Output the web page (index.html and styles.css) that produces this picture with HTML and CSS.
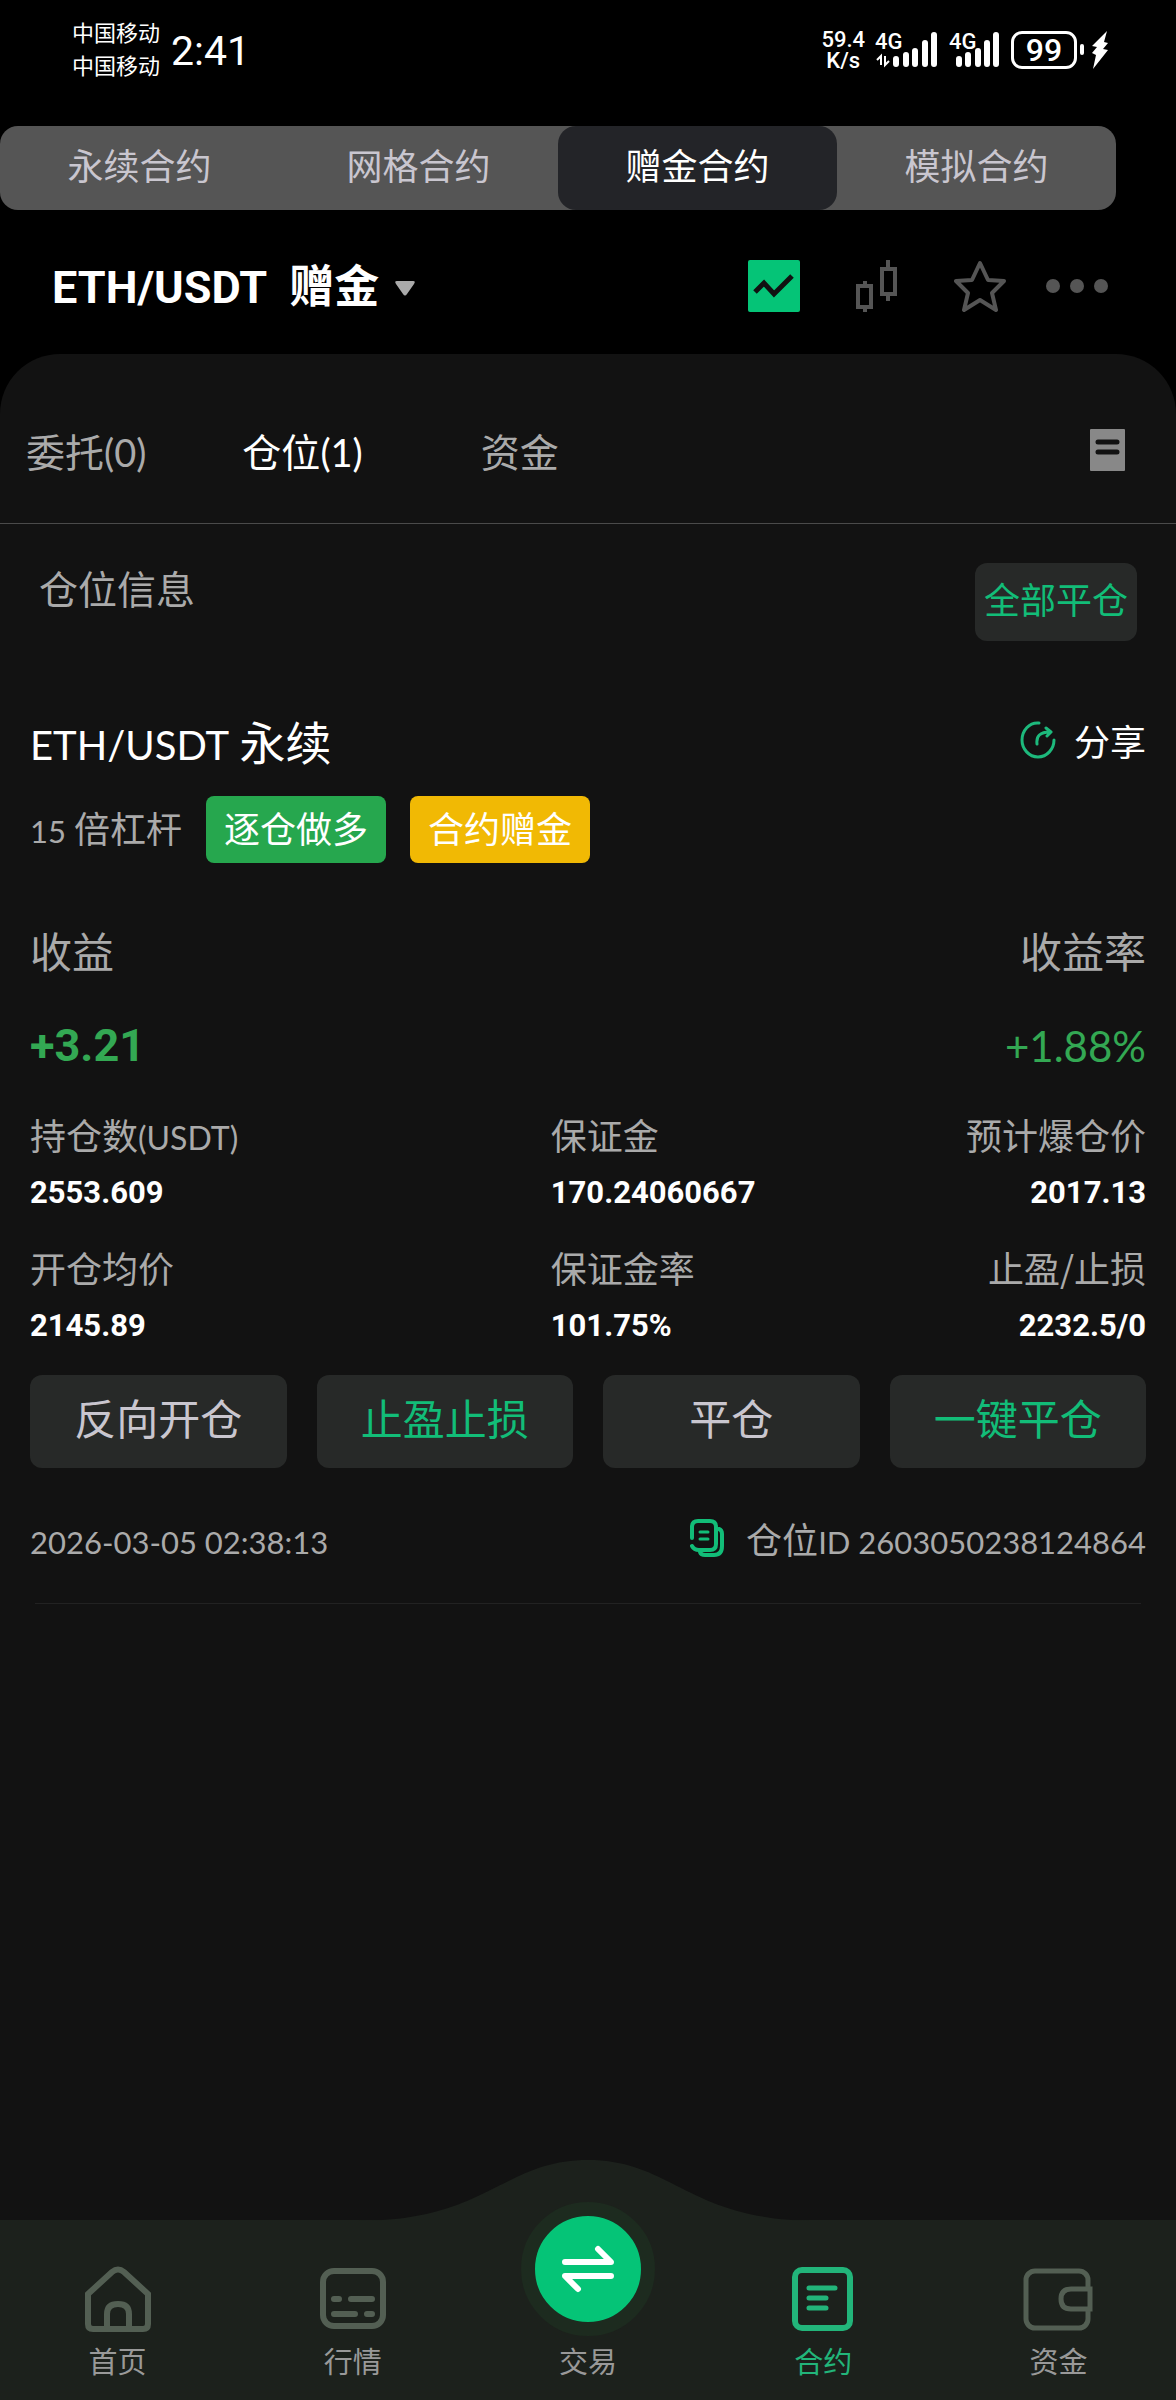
FILE: index.html
```html
<!DOCTYPE html>
<html lang="zh-CN">
<head>
    <meta charset="UTF-8">
    <meta name="viewport" content="width=device-width, initial-scale=1.0">
    <title>赠金合约</title>
    <link rel="stylesheet" href="styles.css">
</head>
<body>
    <div class="status-bar">
        <div class="carriers">
            <span>中国移动</span>
            <span>中国移动</span>
        </div>
        <span class="clock">2:41</span>
        <div class="status-right">
            <div class="net-speed"><span>59.4</span><span>K/s</span></div>
            <svg class="signal" width="64" height="50" viewBox="0 -6 64 50">
                <text x="0" y="18" class="signal-text">4G</text>
                <path d="M6 34v-9l-4 4M10 25v9l4-4" fill="none" stroke="#fff" stroke-width="2"/>
                <path d="M21 33v-5M31 33v-9M40 33V20M50 33V12M59 33V4" stroke="#fff" stroke-width="6" stroke-linecap="round"/>
            </svg>
            <svg class="signal" width="52" height="50" viewBox="0 -6 52 50">
                <text x="0" y="18" class="signal-text">4G</text>
                <path d="M10 33v-5M19 33v-9M29 33V20M38 33V12M47 33V4" stroke="#fff" stroke-width="6" stroke-linecap="round"/>
            </svg>
            <span class="battery">99</span>
            <svg width="18" height="38" viewBox="0 0 18 38">
                <path d="M16 0L1 15l5 1-5 6 4 2-3 14 15-19-5-1 5-6-4-1z" fill="#fff"/>
            </svg>
        </div>
    </div>

    <nav class="contract-tabs">
        <button>永续合约</button>
        <button>网格合约</button>
        <button class="active">赠金合约</button>
        <button>模拟合约</button>
    </nav>

    <header class="pair-bar">
        <button class="pair-select">
            <span>ETH/USDT</span>
            <span>赠金</span>
            <svg width="20" height="15" viewBox="0 0 20 15"><path d="M2 0h16q3 0 1 3l-7 10q-2 3-4 0L1 3q-2-3 1-3z" fill="#aaa"/></svg>
        </button>
        <div class="pair-tools">
            <button aria-label="图表">
                <svg width="52" height="52" viewBox="0 0 52 52">
                    <rect width="52" height="52" rx="2" fill="#05c477"/>
                    <path d="M7 32l9-9 10 11 18-18" fill="none" stroke="#111" stroke-width="5"/>
                </svg>
            </button>
            <button aria-label="K线">
                <svg width="42" height="52" viewBox="0 0 42 52" fill="none" stroke="#555" stroke-width="4">
                    <path d="M2 26h13v21H2zM26 9h13v25H26zM9 21v5M9 47v5M32 0v9M32 34v7"/>
                </svg>
            </button>
            <button aria-label="收藏">
                <svg width="52" height="52" viewBox="0 0 52 52" fill="none" stroke="#555" stroke-width="4" stroke-linejoin="round">
                    <path d="M26 3l8 17 16 1-12 12 4 17-16-10-16 10 4-17L2 21l16-1z"/>
                </svg>
            </button>
            <button aria-label="更多">
                <svg width="62" height="16" viewBox="0 0 62 16" fill="#555">
                    <circle cx="7" cy="8" r="7"/><circle cx="31" cy="8" r="7"/><circle cx="55" cy="8" r="7"/>
                </svg>
            </button>
        </div>
    </header>

    <main class="panel">
        <div class="panel-tabs">
            <button>委托<span class="latin">(0)</span></button>
            <button class="active">仓位<span class="latin">(1)</span></button>
            <button>资金</button>
            <button class="history" aria-label="历史记录">
                <svg width="35" height="42" viewBox="0 0 35 42">
                    <rect width="35" height="42" rx="1" fill="#888"/>
                    <path d="M8 13h19M8 23h19" stroke="#121212" stroke-width="5" stroke-linecap="round"/>
                </svg>
            </button>
        </div>

        <div class="section-head">
            <h2>仓位信息</h2>
            <button class="close-all">全部平仓</button>
        </div>

        <section class="position">
            <div class="row">
                <h3><span class="latin">ETH/USDT</span> 永续</h3>
                <button class="share">
                    <svg width="36" height="38" viewBox="0 0 36 38" fill="none" stroke="#1db97c" stroke-width="3" stroke-linecap="round" stroke-linejoin="round">
                        <path d="M19 2C9 1 2 10 2 19s7 17 16 17 16-8 16-17M17 23c-1-8 3-12 13-12M26 7l5 4-4 4"/>
                    </svg>
                    分享
                </button>
            </div>
            <div class="tags">
                <span class="lever"><span class="latin">15</span> 倍杠杆</span>
                <span class="tag tag-green">逐仓做多</span>
                <span class="tag tag-yellow">合约赠金</span>
            </div>

            <div class="row profit-label">
                <span>收益</span>
                <span>收益率</span>
            </div>
            <div class="row profit">
                <strong>+3.21</strong>
                <span>+1.88%</span>
            </div>

            <dl class="stats">
                <div><dt>持仓数<span class="latin">(USDT)</span></dt><dd>2553.609</dd></div>
                <div><dt>保证金</dt><dd>170.24060667</dd></div>
                <div><dt>预计爆仓价</dt><dd>2017.13</dd></div>
                <div><dt>开仓均价</dt><dd>2145.89</dd></div>
                <div><dt>保证金率</dt><dd>101.75%</dd></div>
                <div><dt>止盈/止损</dt><dd>2232.5/0</dd></div>
            </dl>

            <div class="actions">
                <button>反向开仓</button>
                <button class="green">止盈止损</button>
                <button>平仓</button>
                <button class="green">一键平仓</button>
            </div>

            <div class="row meta">
                <span><span class="latin">2026-03-05 02:38:13</span></span>
                <span class="position-id">
                    <button aria-label="复制">
                        <svg width="34" height="38" viewBox="0 0 34 38" fill="none" stroke="#12bd78" stroke-width="4" stroke-linecap="round">
                            <path d="M2 19V8q0-6 6-6h12q6 0 6 6v17q0 6-6 6H9q-5 0-7-4"/>
                            <path d="M29 10q3 1 3 5v12q0 9-8 9H15q-4 0-5-3"/>
                            <path d="M10 13h8M10 20h8" stroke-width="3"/>
                        </svg>
                    </button>
                    <span>仓位<span class="latin">ID 2603050238124864</span></span>
                </span>
            </div>
            <hr>
        </section>
    </main>

    <nav class="bottom-nav">
        <svg class="hump" width="460" height="61" viewBox="0 0 460 61">
            <path d="M0 61C130 61 145 0 230 0S330 61 460 61z" fill="#1c211c"/>
        </svg>
        <a href="#">
            <svg width="66" height="66" viewBox="0 0 66 66" fill="none" stroke="#535f53" stroke-width="6">
                <path d="M3 28L27 6q6-5 12 0l24 22v30q0 5-5 5H8q-5 0-5-5z"/>
                <path d="M22 62V48q0-10 11-10t11 10v14"/>
            </svg>
            首页
        </a>
        <a href="#">
            <svg width="66" height="66" viewBox="0 0 66 66" fill="none" stroke="#535f53" stroke-width="6" stroke-linecap="round">
                <rect x="3" y="5" width="60" height="55" rx="11"/>
                <path d="M14 33h5M31 33h21M14 48h21M47 48h5"/>
            </svg>
            行情
        </a>
        <a href="#">
            <span class="trade">
                <svg width="56" height="50" viewBox="0 0 56 50" fill="none" stroke="#fff" stroke-width="6" stroke-linecap="round" stroke-linejoin="round">
                    <path d="M5 18h46L38 5M51 32H5l13 13"/>
                </svg>
            </span>
            交易
        </a>
        <a href="#" class="active">
            <svg width="62" height="66" viewBox="0 0 62 66" fill="none" stroke="#22b57a" stroke-width="6" stroke-linecap="round">
                <rect x="3" y="4" width="55" height="58" rx="7"/>
                <path d="M17 22h26M17 32h17M17 42h17" stroke-width="5"/>
            </svg>
            合约
        </a>
        <a href="#">
            <svg width="70" height="66" viewBox="0 0 70 66" fill="none" stroke="#535f53" stroke-width="5">
                <rect x="3" y="5" width="62" height="57" rx="9"/>
                <path d="M67 23H48q-10 0-10 10t10 10h19z" fill="#1c211c"/>
            </svg>
            资金
        </a>
    </nav>
</body>
</html>
```
FILE: styles.css
```css
* {
    box-sizing: border-box;
}
body {
    margin: 0;
    min-height: 100vh;
    display: flex;
    flex-direction: column;
    background: #000;
    color: #fff;
    font-family: "Noto Sans CJK SC", sans-serif;
    font-size: 36px;
    line-height: 48px;
}
button {
    padding: 0;
    border: none;
    background: none;
    color: inherit;
    font: inherit;
    cursor: pointer;
}
h2, h3, dl, dd {
    margin: 0;
    font-weight: normal;
}
svg {
    display: block;
}
.latin {
    font-family: Lato, sans-serif;
    font-size: 32px;
    line-height: 1;
}

/* status bar */
.status-bar {
    display: flex;
    align-items: center;
    height: 100px;
    padding: 0 67px 0 72px;
    font-family: Roboto, "Noto Sans CJK SC", sans-serif;
}
.carriers {
    display: flex;
    flex-direction: column;
    font-size: 22px;
    line-height: 33px;
}
.clock {
    margin-left: 11px;
    padding-top: 2px;
    font-size: 41px;
}
.status-right {
    display: flex;
    align-items: center;
    gap: 10px;
    margin-left: auto;
}
.net-speed {
    display: flex;
    flex-direction: column;
    align-items: center;
    font-size: 22px;
    font-weight: 500;
    line-height: 21px;
}
.signal-text {
    fill: #fff;
    font-size: 22px;
    font-weight: 500;
}
.battery {
    position: relative;
    width: 66px;
    margin-right: 4px;
    border: 3px solid #fff;
    border-radius: 11px;
    font-size: 32px;
    font-weight: 500;
    line-height: 32px;
    text-align: center;
}
.battery::after {
    content: "";
    position: absolute;
    top: 10px;
    right: -10px;
    width: 4px;
    height: 11px;
    border-radius: 2px;
    background: #fff;
}

/* contract type switch */
.contract-tabs {
    display: flex;
    margin: 26px 60px 0 0;
    border-radius: 18px;
    background: #555;
    color: #c9c6cf;
}
.contract-tabs button {
    flex: 1;
    height: 84px;
    padding-bottom: 8px;
    border-radius: 18px;
}
.contract-tabs .active {
    background: #232428;
    color: #fff;
}

.pair-bar {
    display: flex;
    justify-content: space-between;
    align-items: center;
    height: 144px;
    padding: 8px 68px 0 52px;
}
.pair-select {
    display: flex;
    align-items: center;
    gap: 16px;
    padding-top: 4px;
    font-family: Roboto, "Noto Sans CJK SC", sans-serif;
    font-size: 45px;
    font-weight: bold;
}
.pair-select span:first-child {
    margin-right: 6px;
}
.pair-tools {
    display: flex;
    align-items: center;
    gap: 56px;
}
.pair-tools button:last-child {
    margin-left: -16px;
}

/* main panel */
.panel {
    flex: 1;
    border-radius: 60px 60px 0 0;
    background: #121212;
    color: #aaa;
}
.panel-tabs {
    display: flex;
    align-items: center;
    height: 170px;
    padding: 23px 51px 0 26px;
    border-bottom: 1px solid #4a4a4a;
    font-size: 39px;
}
.panel-tabs button {
    margin-right: 96px;
}
.panel-tabs .active {
    margin-right: 118px;
    color: #fff;
}
.panel-tabs .latin {
    font-size: 38px;
}
.panel-tabs .history {
    margin: 0 0 0 auto;
}
.section-head {
    display: flex;
    justify-content: space-between;
    align-items: flex-start;
    padding: 39px 39px 0;
}
.section-head h2 {
    font-size: 39px;
}
.close-all {
    height: 78px;
    padding: 0 9px 8px;
    border-radius: 12px;
    background: #272928;
    color: #12bd78;
}

/* position card */
.position {
    margin: 69px 30px 0;
    padding-bottom: 36px;
}
.row {
    display: flex;
    justify-content: space-between;
    align-items: center;
}
.position h3 {
    color: #fff;
    font-size: 46px;
    line-height: 60px;
}
.position h3 .latin {
    font-size: 40px;
}
.share {
    display: flex;
    align-items: center;
    gap: 18px;
    color: #fff;
}
.tags {
    display: flex;
    align-items: center;
    gap: 24px;
    margin-top: 26px;
}
.lever {
    padding-bottom: 5px;
}
.tag {
    padding: 7px 18px 12px;
    border-radius: 8px;
    color: #fff;
}
.tag-green {
    background: #26a74e;
}
.tag-yellow {
    background: #f1b904;
}
.profit-label {
    margin-top: 63px;
    font-size: 42px;
}
.profit {
    margin-top: 48px;
    color: #33a853;
    font-family: Lato, sans-serif;
    font-size: 42px;
}
.profit strong {
    font-family: Roboto, sans-serif;
    font-size: 45px;
}
.stats {
    display: grid;
    grid-template-columns: 7fr 4fr 4fr;
    row-gap: 26px;
    margin-top: 40px;
}
.stats div:nth-child(3n) {
    text-align: right;
}
.stats dd {
    margin-top: 11px;
    color: #fff;
    font-family: Roboto, sans-serif;
    font-size: 31px;
    font-weight: bold;
}
.actions {
    display: flex;
    gap: 30px;
    margin-top: 25px;
}
.actions button {
    flex: 1;
    height: 93px;
    padding-bottom: 9px;
    border-radius: 12px;
    background: #272928;
    color: #c9c6cf;
    font-size: 42px;
}
.actions .green {
    color: #12bd78;
}
.meta {
    margin-top: 46px;
}
.lever .latin,
.meta .latin {
    font-size: 31px;
}
.position-id {
    display: flex;
    align-items: center;
    gap: 22px;
}
hr {
    margin: 41px 5px 0;
    border: none;
    border-top: 1px solid #222;
}

/* bottom navigation */
.bottom-nav {
    position: relative;
    display: flex;
    height: 180px;
    padding-bottom: 18px;
    background: #1c211c;
}
.hump {
    position: absolute;
    left: 50%;
    bottom: 179px;
    margin-left: -230px;
}
.bottom-nav a {
    position: relative;
    flex: 1;
    display: flex;
    flex-direction: column;
    align-items: center;
    justify-content: flex-end;
    gap: 6px;
    color: #999;
    font-size: 29px;
    line-height: 44px;
    text-decoration: none;
}
.bottom-nav .active {
    color: #22b57a;
}
.trade {
    display: flex;
    flex-shrink: 0;
    align-items: center;
    justify-content: center;
    width: 134px;
    height: 134px;
    margin-bottom: -4px;
    border: 14px solid #1d2b1f;
    border-radius: 50%;
    background: #05c477;
}
```
